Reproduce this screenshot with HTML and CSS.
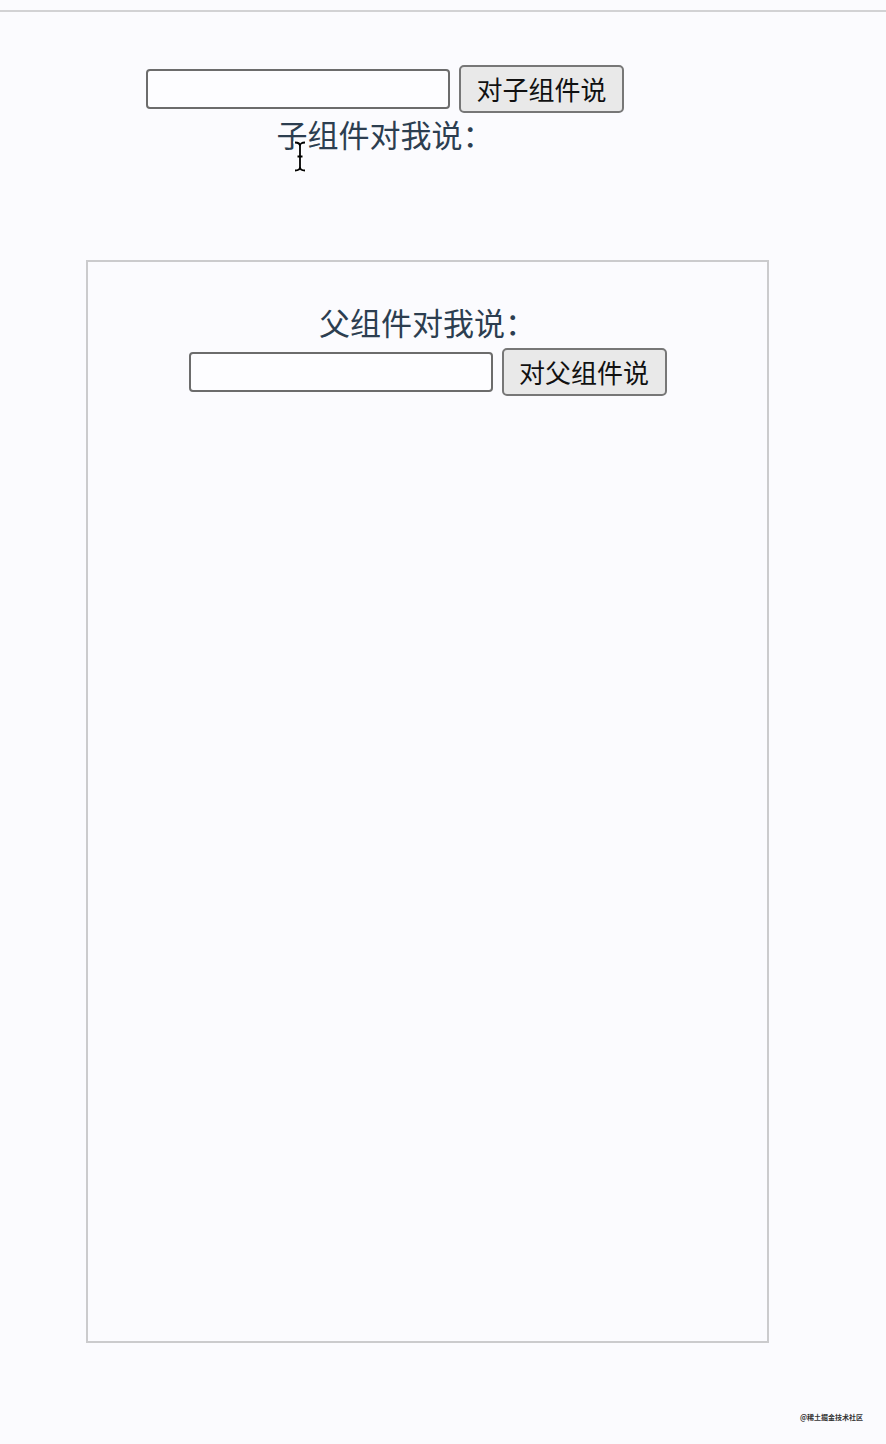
FILE: index.html
```html
<!DOCTYPE html>
<html lang="zh-CN">
<head>
<meta charset="utf-8">
<title>父子组件通信</title>
<link rel="stylesheet" href="styles.css">
</head>
<body>
<div class="topline"></div>
<div class="parent">
  <div class="row">
    <input class="field" type="text">
    <button class="btn">对子组件说</button>
  </div>
  <div class="label">子组件对我说：</div>
</div>
<div class="child">
  <div class="label">父组件对我说：</div>
  <div class="row">
    <input class="field" type="text">
    <button class="btn">对父组件说</button>
  </div>
</div>
<svg class="cursor" width="16" height="31" viewBox="0 0 16 31">
  <path d="M3 1.5 Q8 1.5 8 5 Q8 1.5 13 1.5 M8 5 V26 Q8 29.5 3 29.5 M8 26 Q8 29.5 13 29.5 M5.5 15.5 H10.5" fill="none" stroke="#fff" stroke-width="3.5" stroke-linecap="round"/>
  <path d="M3 1.5 Q8 1.5 8 5 Q8 1.5 13 1.5 M8 5 V26 Q8 29.5 3 29.5 M8 26 Q8 29.5 13 29.5 M5.5 15.5 H10.5" fill="none" stroke="#000" stroke-width="1.8"/>
</svg>
<div class="watermark">@稀土掘金技术社区</div>
</body>
</html>
```

FILE: styles.css
```css
html, body {
  margin: 0;
  padding: 0;
  background: #fbfbfe;
}
body {
  position: relative;
  min-height: 1444px;
  font-family: "Noto Sans CJK SC", "Noto Sans", sans-serif;
  color: #2c3e50;
}
.topline {
  margin-top: 10px;
  border-top: 2px solid #d2d2d4;
}
.parent {
  width: 770px;
  padding-top: 53px;
  text-align: center;
}
.row {
  display: flex;
  justify-content: center;
  align-items: center;
  gap: 9px;
}
.field {
  box-sizing: border-box;
  width: 304px;
  height: 40px;
  margin: 0;
  border: 2px solid #6c6c6c;
  border-radius: 4px;
  background: #fdfdff;
}
.btn {
  box-sizing: border-box;
  width: 165px;
  height: 48px;
  margin: 0;
  padding: 0;
  border: 2px solid #777;
  border-radius: 5px;
  background: #e9e9e9;
  color: #111;
  font-family: "Noto Sans CJK SC", "Noto Sans", sans-serif;
  font-size: 26px;
  line-height: 40px;
}
.label {
  font-size: 31px;
  line-height: 40px;
  text-align: center;
}
.parent .label {
  margin-top: 1px;
}
.child {
  box-sizing: border-box;
  width: 683px;
  height: 1083px;
  margin: 106px 0 0 86px;
  padding-top: 40px;
  border: 2px solid #cbcbcd;
}
.child .row {
  margin-top: 6px;
}
.cursor {
  position: absolute;
  left: 292px;
  top: 141px;
}
.watermark {
  position: absolute;
  left: 800px;
  top: 1412px;
  font-size: 7px;
  line-height: 10px;
  color: #333;
  font-weight: bold;
}
```
